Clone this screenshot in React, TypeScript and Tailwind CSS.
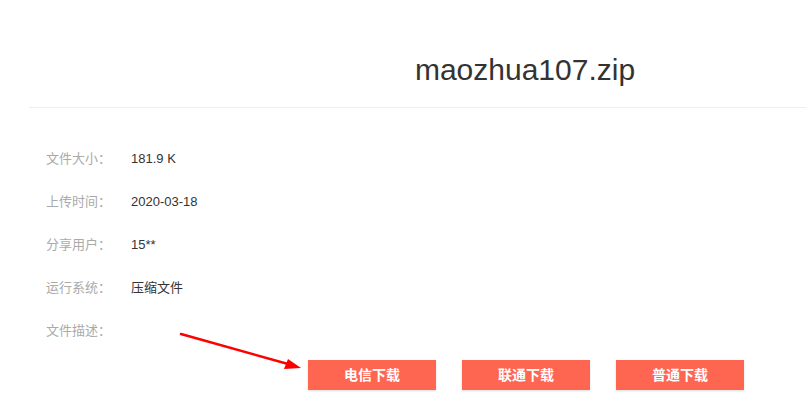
import React from "react";

const rows: [string, string][] = [
  ["文件大小：", "181.9 K"],
  ["上传时间：", "2020-03-18"],
  ["分享用户：", "15**"],
  ["运行系统：", "压缩文件"],
  ["文件描述：", ""],
];

export default function App() {
  return (
    <div
      className="relative w-[806px] h-[419px] overflow-hidden bg-white"
      style={{ fontFamily: '"Liberation Sans", Arial, "Noto Sans CJK SC", sans-serif' }}
    >
      <div className="ml-[29px] w-[992px]">
        <div className="h-[107px] flex items-center justify-center pt-[33px]">
          <h1 className="text-[30px] leading-none text-[#333]">maozhua107.zip</h1>
        </div>
        <div className="h-px bg-[#eeeeee]" />
        <div className="pl-[17px] pt-[29px]">
          {rows.map(([k, v]) => (
            <div key={k} className="flex items-center h-[43px] text-[13px]">
              <span className="w-[85px] text-[#aaaaaa]">{k}</span>
              <span className="text-[#333]">{v}</span>
            </div>
          ))}
        </div>
        <div className="flex gap-[26px] ml-[279px] mt-[8px]">
          {["电信下载", "联通下载", "普通下载"].map((t) => (
            <div
              key={t}
              className="w-[128px] h-[30px] flex items-center justify-center bg-[#ff6652] text-white text-[14px] font-bold shadow-[0_1px_2px_rgba(0,0,0,0.15)]"
            >
              {t}
            </div>
          ))}
        </div>
      </div>
      <svg className="absolute left-0 top-0" width="806" height="419" viewBox="0 0 806 419">
        <line x1="181" y1="334" x2="288" y2="364" stroke="#ff0000" strokeWidth="2.5" strokeLinecap="round" />
        <polygon points="301,368 284,369 288,359" fill="#ff0000" />
      </svg>
    </div>
  );
}
